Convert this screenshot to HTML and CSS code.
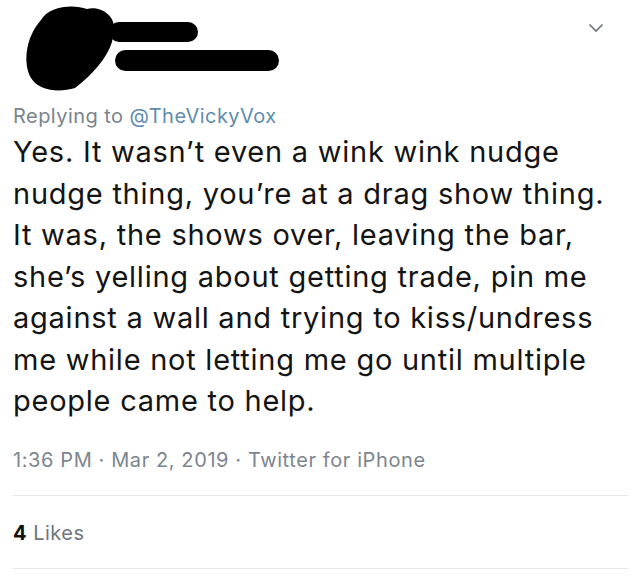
FILE: index.html
```html
<!DOCTYPE html>
<html>
	<head>
		<meta charset="utf-8">
		<title>Tweet</title>
		<link rel="stylesheet" href="styles.css">
	</head>
	<body>
		<div class="tweet">
			<div class="head">
				<svg class="scribble" width="280" height="95" viewBox="0 0 280 95">
					<path d="M28 20 C36 6 60 4 74 9 C86 6 100 14 101 26 L99 42 C94 58 80 74 62 88 C46 93 26 91 18 78 C10 64 12 38 28 20 Z" fill="#000"/>
					<rect x="96" y="22" width="89" height="20" rx="10" fill="#000"/>
					<rect x="102" y="50" width="164" height="21" rx="10.5" fill="#000"/>
				</svg>
				<svg class="chevron" width="16" height="10" viewBox="0 0 16 10">
					<path d="M1.5 1.5 L8 8 L14.5 1.5" fill="none" stroke="#6e7379" stroke-width="1.6"/>
				</svg>
			</div>
			<div class="reply">Replying to <span class="handle">@TheVickyVox</span></div>
			<p class="text">Yes. It wasn’t even a wink wink nudge<br>
				nudge thing, you’re at a drag show thing.<br>
				It was, the shows over, leaving the bar,<br>
				she’s yelling about getting trade, pin me<br>
				against a wall and trying to kiss/undress<br>
				me while not letting me go until multiple<br>
				people came to help.</p>
			<div class="meta">1:36 PM · Mar 2, 2019 · Twitter for iPhone</div>
			<div class="stats"><b>4</b> Likes</div>
		</div>
	</body>
</html>
```
FILE: styles.css
```css
* {margin:0; padding:0;}
body {background:#fff; font-family:Inter, "Liberation Sans", sans-serif; width:640px; height:580px; overflow:hidden;}

.tweet {padding:0 12px 0 13px;}
.head {height:103px; position:relative;}
.scribble {position:absolute; left:0; top:0;}
.chevron {position:absolute; right:24px; top:23px;}

.reply {font-size:20px; color:#7a848d; line-height:26px; height:26px; letter-spacing:0.45px;}
.handle {color:#5f8cad;}

.text {font-size:29px; line-height:41.5px; color:#141414; margin-top:2px; white-space:nowrap; letter-spacing:0.75px;}

.meta {font-size:20px; color:#7d858d; margin-top:25px; line-height:26px; padding-bottom:22px; border-bottom:1px solid #e6e9ec; letter-spacing:0.6px;}
.stats {font-size:20px; color:#6f767d; padding:24px 0 22px; line-height:26px; border-bottom:1px solid #e6e9ec; letter-spacing:0.5px;}
.stats b {color:#111;}
```
